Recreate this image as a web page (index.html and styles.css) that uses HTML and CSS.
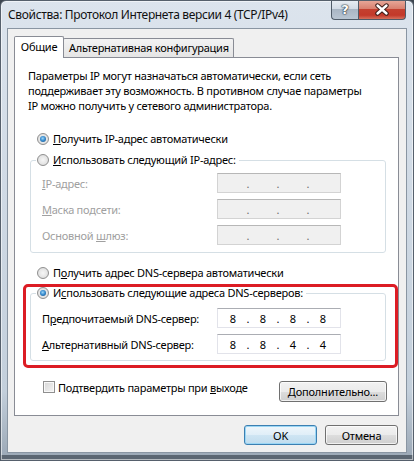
FILE: index.html
```html
<!DOCTYPE html>
<html lang="ru">
<head>
  <meta charset="UTF-8" />
  <title>Свойства: Протокол Интернета версии 4 (TCP/IPv4)</title>
  <link rel="stylesheet" href="styles.css">
</head>
<body>
  <div class="window">
    <!-- Title bar -->
    <div class="titlebar">
      <span class="title">Свойства: Протокол Интернета версии 4 (TCP/IPv4)</span>
      <div class="caption-buttons">
        <span class="cap-btn help">?</span>
        <span class="cap-btn close">
          <svg width="16" height="13" viewBox="0 0 16 13">
            <path d="M3.5 2.5 L12.5 10.5 M12.5 2.5 L3.5 10.5" stroke="#3c1c18" stroke-width="4.4" stroke-linecap="round" fill="none"/>
            <path d="M3.5 2.5 L12.5 10.5 M12.5 2.5 L3.5 10.5" stroke="#ffffff" stroke-width="2.4" stroke-linecap="round" fill="none"/>
          </svg>
        </span>
      </div>
    </div>

    <div class="client">
      <div class="tabs">
        <div class="tab active">Общие</div>
        <div class="tab">Альтернативная конфигурация</div>
      </div>

      <div class="panel">
        <p class="intro">Параметры IP могут назначаться автоматически, если сеть<br>поддерживает эту возможность. В противном случае параметры<br>IP можно получить у сетевого администратора.</p>

        <div class="option first">
          <span class="radio checked"></span>
          <span><u>П</u>олучить IP-адрес автоматически</span>
        </div>

        <fieldset class="group ip-group">
          <legend class="option">
            <span class="radio"></span>
            <span><u>И</u>спользовать следующий IP-адрес:</span>
          </legend>
          <div class="field disabled">
            <span class="label"><u>I</u>P-адрес:</span>
            <span class="ipbox"><span class="oct"></span><span class="dot">.</span><span class="oct"></span><span class="dot">.</span><span class="oct"></span><span class="dot">.</span><span class="oct"></span></span>
          </div>
          <div class="field disabled">
            <span class="label"><u>М</u>аска подсети:</span>
            <span class="ipbox"><span class="oct"></span><span class="dot">.</span><span class="oct"></span><span class="dot">.</span><span class="oct"></span><span class="dot">.</span><span class="oct"></span></span>
          </div>
          <div class="field disabled">
            <span class="label">Основной <u>ш</u>люз:</span>
            <span class="ipbox"><span class="oct"></span><span class="dot">.</span><span class="oct"></span><span class="dot">.</span><span class="oct"></span><span class="dot">.</span><span class="oct"></span></span>
          </div>
        </fieldset>

        <div class="option dns-auto">
          <span class="radio"></span>
          <span>П<u>о</u>лучить адрес DNS-сервера автоматически</span>
        </div>

        <div class="highlight">
          <fieldset class="group dns-group">
            <legend class="option">
              <span class="radio checked"></span>
              <span>И<u>с</u>пользовать следующие адреса DNS-серверов:</span>
            </legend>
            <div class="field">
              <span class="label">П<u>р</u>едпочитаемый DNS-сервер:</span>
              <span class="ipbox"><span class="oct">8</span><span class="dot">.</span><span class="oct">8</span><span class="dot">.</span><span class="oct">8</span><span class="dot">.</span><span class="oct">8</span></span>
            </div>
            <div class="field">
              <span class="label"><u>А</u>льтернативный DNS-сервер:</span>
              <span class="ipbox"><span class="oct">8</span><span class="dot">.</span><span class="oct">8</span><span class="dot">.</span><span class="oct">4</span><span class="dot">.</span><span class="oct">4</span></span>
            </div>
          </fieldset>
        </div>

        <div class="bottom-row">
          <label class="check">
            <span class="checkbox"></span>
            <span>Подтвердить параметры при <u>в</u>ыходе</span>
          </label>
          <button class="btn advanced"><u>Д</u>ополнительно...</button>
        </div>
      </div>

      <div class="footer">
        <button class="btn default">OK</button>
        <button class="btn">Отмена</button>
      </div>
    </div>
  </div>
</body>
</html>
```

FILE: styles.css
```css
* {
  box-sizing: border-box;
}

body {
  margin: 0;
  padding: 0;
  background: #3d4650;
  font-family: 'Noto Sans', 'DejaVu Sans', sans-serif;
  font-size: 11px;
  letter-spacing: -0.25px;
  color: #000;
}

u {
  text-decoration: underline;
  text-underline-offset: 1px;
}

/* window frame */
.window {
  width: 414px;
  height: 461px;
  border: 1px solid #56606c;
  border-radius: 6px 6px 0 0;
  background: linear-gradient(to bottom, #dce4ed 0%, #d0dae5 40%, #c3cfdb 85%, #9aa7b5 100%);
  box-shadow: inset 0 0 0 1px rgba(255, 255, 255, 0.55), inset 0 -5px 0 #5b6672;
  overflow: hidden;
}

.titlebar {
  height: 27px;
  display: flex;
  justify-content: space-between;
  align-items: flex-start;
}

.title {
  padding: 6px 0 0 7px;
  font-size: 12px;
  letter-spacing: -0.35px;
  line-height: 16px;
  color: #111;
}

.caption-buttons {
  display: flex;
  margin-right: 7px;
  margin-top: -1px;
}

.cap-btn {
  height: 20px;
  display: flex;
  align-items: center;
  justify-content: center;
  border: 1px solid #4f5b68;
  border-top: none;
}

.cap-btn.help {
  width: 27px;
  border-radius: 0 0 0 4px;
  border-right: none;
  background: linear-gradient(to bottom, #e9eef4 0%, #d3dce6 45%, #a9b6c4 50%, #b9c5d2 100%);
  color: #fff;
  font-weight: bold;
  font-size: 13px;
  font-family: 'DejaVu Sans', sans-serif;
  text-shadow: 0 0 1px #2a333c, 0 0 1px #2a333c, 0 0 2px #2a333c;
}

.cap-btn.close {
  width: 48px;
  border-radius: 0 0 4px 0;
  background: linear-gradient(to bottom, #e9ab9c 0%, #d98170 45%, #c4402f 50%, #c3392a 80%, #d6705c 100%);
}

/* client area */
.client {
  margin: 0 6px;
  height: 425px;
  border: 1px solid #8995a2;
  background: #f0f0f0;
  padding: 7px 7px 0 6px;
  display: flex;
  flex-direction: column;
}

.tabs {
  display: flex;
  align-items: flex-end;
  height: 21px;
}

.tab {
  height: 19px;
  border: 1px solid #898c95;
  border-bottom: none;
  background: linear-gradient(to bottom, #f3f3f3, #e5e5e5);
  padding: 0 4px 0 5px;
  line-height: 18px;
  margin-left: -1px;
  border-radius: 2px 2px 0 0;
}

.tab.active {
  height: 22px;
  width: 50px;
  margin-left: 0;
  margin-bottom: -1px;
  position: relative;
  z-index: 1;
  background: #fff;
  text-align: center;
  padding: 0;
  line-height: 20px;
}

.panel {
  height: 359px;
  border: 1px solid #898c95;
  background: #fff;
  padding: 10px 12px 13px 15px;
}

.intro {
  margin: 0 0 0 -2px;
  line-height: 15px;
}

.option {
  display: flex;
  align-items: center;
  gap: 4px;
  height: 16px;
  line-height: 16px;
}

.option.first {
  margin-top: 18px;
  padding-left: 7px;
}

.option.dns-auto {
  margin-top: 12px;
  padding-left: 7px;
}

.radio {
  width: 12px;
  height: 12px;
  border-radius: 50%;
  border: 1px solid #8f8f8f;
  background: radial-gradient(circle at 50% 50%, #f6f6f6 0%, #e4e4e4 60%, #cfcfcf 100%);
  display: flex;
  align-items: center;
  justify-content: center;
  flex: none;
}

.radio.checked::after {
  content: '';
  width: 6px;
  height: 6px;
  border-radius: 50%;
  background: radial-gradient(circle at 45% 40%, #9fd6f6 0%, #3b8fd1 45%, #0f477f 100%);
}

/* group boxes */
.group {
  margin: 5px 0 0 0;
  padding: 0 0 7px 0;
  border: 1px solid #d5dfe5;
  border-radius: 3px;
  min-width: 0;
}

.group legend {
  margin-left: 5px;
  padding: 0 3px 0 1px;
}

.dns-group {
  margin-top: 0;
  padding-bottom: 6px;
}

.field {
  display: flex;
  align-items: center;
  justify-content: space-between;
  padding: 0 44px 0 11px;
  margin-top: 6px;
  height: 20px;
}

.ip-group .field:first-of-type {
  margin-top: 5px;
}

.dns-group .field:first-of-type {
  margin-top: 7px;
}

.field.disabled .label {
  color: #a0a0a0;
}

.ipbox {
  width: 124px;
  height: 20px;
  display: flex;
  align-items: center;
  padding-left: 4px;
  border: 1px solid #e2e3ea;
  border-top-color: #abadb3;
  background: #fff;
  font-size: 11px;
  letter-spacing: 0;
}

.disabled .ipbox {
  background: #f0f0f0;
  border-color: #d3d3d3;
  border-top-color: #b7b7b7;
  color: #6d6d6d;
}

.oct {
  width: 22px;
  text-align: center;
}

.dot {
  width: 8px;
  text-align: center;
}

/* red marker around DNS settings */
.highlight {
  position: relative;
  margin-top: 4px;
}

.highlight::after {
  content: '';
  position: absolute;
  left: -7px;
  right: -12px;
  top: -1px;
  bottom: -7px;
  border: 3px solid #dc1c24;
  border-radius: 5px;
  pointer-events: none;
}

.bottom-row {
  display: flex;
  justify-content: space-between;
  align-items: flex-start;
  margin-top: 20px;
  height: 21px;
  padding-left: 13px;
}

.check {
  display: flex;
  align-items: center;
  gap: 3px;
  height: 16px;
  margin-top: -2px;
}

.checkbox {
  width: 12px;
  height: 12px;
  border: 1px solid #8f8f8f;
  background: linear-gradient(135deg, #d6d6d6 0%, #f4f4f4 100%);
  box-shadow: inset 0 0 0 1px #f8f8f8;
}

/* buttons */
.btn {
  font-family: inherit;
  font-size: 11px;
  letter-spacing: -0.2px;
  color: #000;
  height: 20px;
  padding: 0;
  border: 1px solid #707070;
  border-radius: 3px;
  background: linear-gradient(to bottom, #f2f2f2 0%, #ebebeb 50%, #dddddd 51%, #cfcfcf 100%);
  box-shadow: inset 0 0 0 1px rgba(255, 255, 255, 0.7);
}

.btn.advanced {
  width: 108px;
  height: 21px;
  margin-right: -1px;
}

.footer {
  display: flex;
  justify-content: flex-end;
  gap: 8px;
  padding-top: 9px;
  padding-right: 1px;
}

.footer .btn {
  width: 73px;
}

.btn.default {
  border-color: #3c7fb1;
  background: linear-gradient(to bottom, #eef6fb 0%, #e0eef8 50%, #cfe5f3 51%, #c0dcee 100%);
  box-shadow: inset 0 0 0 1px #9ad6f5;
}
```
